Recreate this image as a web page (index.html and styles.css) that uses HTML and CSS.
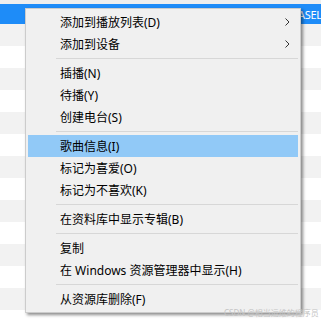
FILE: index.html
```html
<!DOCTYPE html>
<html lang="zh">
<head>
    <meta charset="UTF-8">
    <title>右键菜单</title>
    <link rel="stylesheet" href="styles.css">
</head>
<body>
    <div class="list">
        <div class="top-strip"></div>
        <div class="header"><span class="header-text">ASEL</span></div>
        <div class="row"></div>
        <div class="row"></div>
        <div class="row"></div>
        <div class="row"></div>
        <div class="row"></div>
        <div class="row"></div>
        <div class="row"></div>
        <div class="row"></div>
        <div class="row"></div>
        <div class="row"></div>
        <div class="row"></div>
        <div class="row"></div>
        <div class="row"></div>
        <div class="row"></div>
    </div>

    <!-- 右键菜单 -->
    <div class="menu">
        <div class="item">添加到播放列表(D)<svg class="arrow" width="5" height="8" viewBox="0 0 5 8"><path d="M0.5 0.5 L4 4 L0.5 7.5" fill="none" stroke="#333" stroke-width="1"/></svg></div>
        <div class="item">添加到设备<svg class="arrow" width="5" height="8" viewBox="0 0 5 8"><path d="M0.5 0.5 L4 4 L0.5 7.5" fill="none" stroke="#333" stroke-width="1"/></svg></div>
        <div class="sep"></div>
        <div class="item">插播(N)</div>
        <div class="item">待播(Y)</div>
        <div class="item">创建电台(S)</div>
        <div class="sep"></div>
        <div class="item active">歌曲信息(I)</div>
        <div class="item">标记为喜爱(O)</div>
        <div class="item">标记为不喜欢(K)</div>
        <div class="sep"></div>
        <div class="item">在资料库中显示专辑(B)</div>
        <div class="sep"></div>
        <div class="item">复制</div>
        <div class="item">在 Windows 资源管理器中显示(H)</div>
        <div class="sep"></div>
        <div class="item">从资源库删除(F)</div>
    </div>

    <div class="watermark">CSDN @相当运维的程序员</div>
</body>
</html>
```

FILE: styles.css
```css
/* 全局样式 */
html, body {
    margin: 0;
    padding: 0;
    width: 100%;
    height: 100%;
    overflow: hidden;
    background: #ffffff;
    font-family: "Noto Sans", "Noto Sans CJK SC", sans-serif;
}

/* 背景列表 */
.list {
    display: flex;
    flex-direction: column;
}

.top-strip {
    height: 4px;
    background: #eeeeee;
}

.header {
    height: 20px;
    background: #1e8cf8;
    display: flex;
    align-items: center;
    padding-left: 298px;
    color: #ffffff;
    font-size: 11px;
    letter-spacing: -0.3px;
    white-space: nowrap;
}

.row {
    height: 22px;
    background: #ffffff;
}

.row:nth-child(odd) {
    background: #f2f2f2;
}

/* 菜单 */
.menu {
    position: absolute;
    left: 25px;
    top: 8px;
    width: 276px;
    box-sizing: border-box;
    padding: 2px;
    background: #f0f0f0;
    border: 1px solid #cccccc;
    box-shadow: 2px 2px 3px rgba(0, 0, 0, 0.45);
}

.item {
    height: 22px;
    display: flex;
    align-items: center;
    justify-content: space-between;
    padding: 0 8px 0 32px;
    font-size: 12px;
    color: #000000;
    white-space: nowrap;
}

.item.active {
    background: #91c9f7;
}

.sep {
    height: 1px;
    margin: 3px 0 3px 28px;
    background: #d7d7d7;
}

/* 水印 */
.watermark {
    position: absolute;
    left: 224px;
    top: 307px;
    font-size: 8px;
    color: #c4c4c4;
    white-space: nowrap;
}
```
